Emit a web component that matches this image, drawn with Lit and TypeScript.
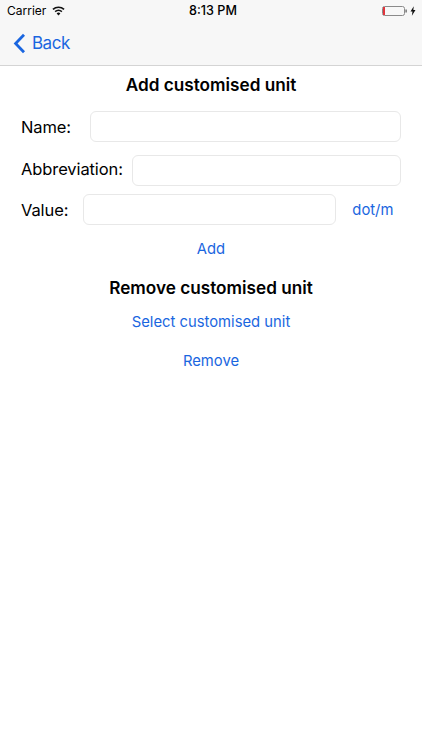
import { LitElement, html, css } from "lit";
import { customElement } from "lit/decorators.js";

@customElement("app-root")
export class AppRoot extends LitElement {
  static styles = css`
    :host { display: block; width: 422px; height: 750px; background: #fff; font-family: Inter, "Liberation Sans", sans-serif; color: #000; overflow: hidden; }
    .nav { height: 65px; background: #f7f7f7; border-bottom: 1px solid #d4d4d4; display: flex; flex-direction: column; }
    .status { height: 21px; position: relative; display: flex; align-items: center; justify-content: space-between; padding: 0 6px 0 7px; font-size: 12px; }
    .left { display: flex; align-items: center; gap: 6px; }
    .time { position: absolute; left: 4px; right: 0; text-align: center; font-weight: 500; font-size: 12.6px; }
    .right { display: flex; align-items: center; gap: 3px; }
    .back { display: flex; align-items: center; gap: 6px; padding: 6px 0 0 13px; color: #1a66e0; font-size: 17px; letter-spacing: -0.5px; height: 32px; }
    .title { font-weight: 600; font-size: 17.2px; text-align: center; line-height: 20px; }
    .t1 { margin-top: 9px; }
    .t2 { margin-top: 19px; }
    .form { padding: 0 21px; display: flex; flex-direction: column; margin-top: 16px; }
    .row { display: flex; align-items: center; font-size: 16.5px; height: 31px; letter-spacing: -0.1px; }
    .r2 { margin-top: 13px; }
    .r3 { margin-top: 8px; }
    .lift { padding-bottom: 3px; }
    .input { border: 1px solid #e8e8e8; border-radius: 6px; flex: 1; box-sizing: border-box; height: 31px; background: #fff; }
    .n { margin-left: 19px; }
    .a { margin-left: 9px; }
    .v { margin-left: 15px; flex: none; width: 253px; }
    .unit { color: #1a66e0; font-size: 14.8px; margin-left: 16px; letter-spacing: 0; }
    .link { color: #1a66e0; font-size: 14.8px; text-align: center; line-height: 20px; }
    .l1 { margin-top: 14px; }
    .l2 { margin-top: 14px; }
    .l3 { margin-top: 19px; }
  `;
  render() {
    return html`
      <div class="nav">
        <div class="status">
          <div class="left">
            <span>Carrier</span>
            <svg width="13" height="10" viewBox="0 0 13 10"><path d="M6.5 9.6 4.6 7.4a2.8 2.8 0 0 1 3.8 0zM3.6 6.3 2.6 5.1a5.9 5.9 0 0 1 7.8 0L9.4 6.3a4.4 4.4 0 0 0-5.8 0zM1.5 4 .4 2.8a9 9 0 0 1 12.2 0L11.5 4a7.4 7.4 0 0 0-10 0z" fill="#111"/></svg>
          </div>
          <div class="time">8:13 PM</div>
          <div class="right">
            <svg width="25" height="10" viewBox="0 0 25 10"><rect x=".5" y=".5" width="22" height="9" rx="2" fill="none" stroke="#8a8a8a"/><rect x="1" y="1" width="2" height="8" fill="#e0343c"/><rect x="23.5" y="3.5" width="1.2" height="3" fill="#555"/></svg>
            <svg width="6" height="10" viewBox="0 0 7 11"><path d="M4.4 0 .6 6.2h2.3L2.2 11 6.4 4.4H3.9z" fill="#111"/></svg>
          </div>
        </div>
        <div class="back">
          <svg width="13" height="21" viewBox="0 0 13 21"><path d="M11 1.8 2.6 10.5l8.4 8.7" fill="none" stroke="#1a66e0" stroke-width="2.8"/></svg>
          <span>Back</span>
        </div>
      </div>
      <div class="title t1">Add customised unit</div>
      <div class="form">
        <div class="row"><span>Name:</span><div class="input n"></div></div>
        <div class="row r2"><span class="lift">Abbreviation:</span><div class="input a"></div></div>
        <div class="row r3"><span>Value:</span><div class="input v"></div><span class="unit">dot/m</span></div>
      </div>
      <div class="link l1">Add</div>
      <div class="title t2">Remove customised unit</div>
      <div class="link l2">Select customised unit</div>
      <div class="link l3">Remove</div>
    `;
  }
}
